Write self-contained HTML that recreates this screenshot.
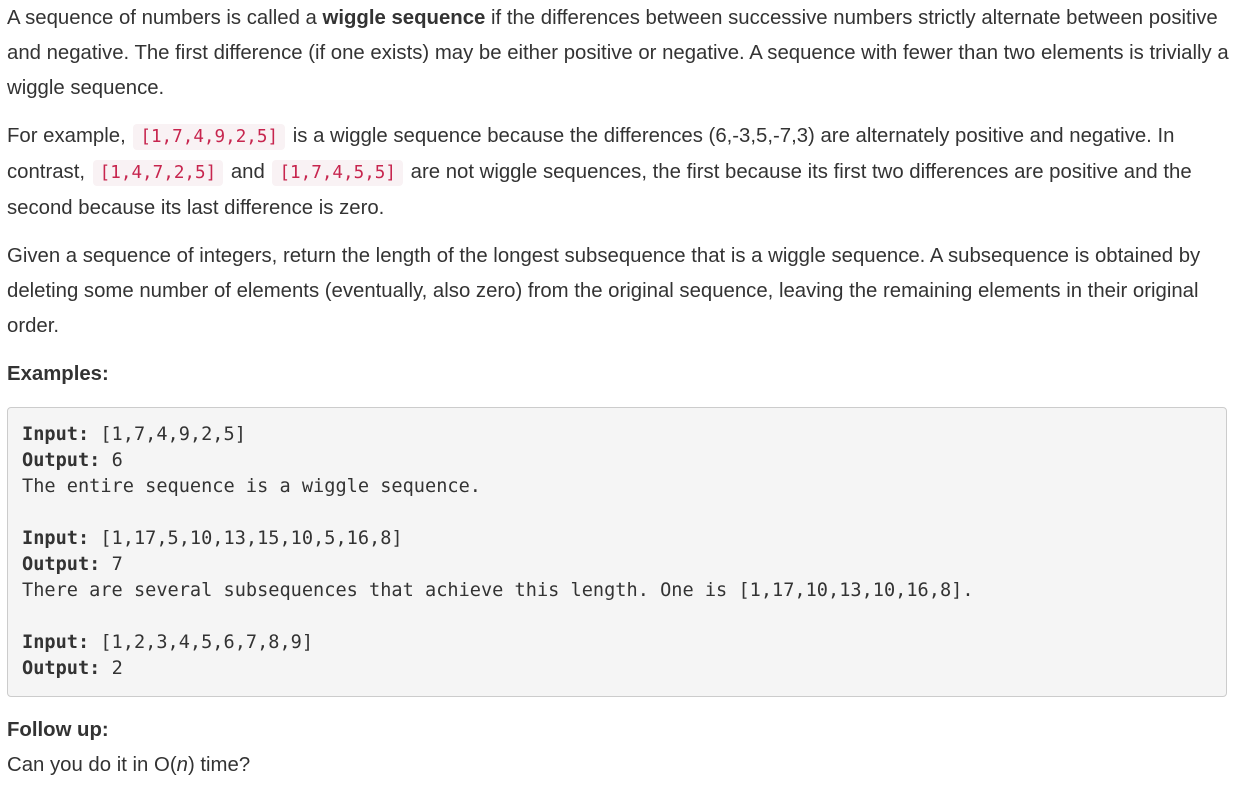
<!DOCTYPE html>
<html><head><meta charset="utf-8"><style>
body{margin:0;background:#fff;width:1240px;height:786px;overflow:hidden;font-family:"Liberation Sans",Arial,sans-serif;font-size:20.35px;line-height:35px;color:#333;}
.w{padding:0 7px;}
p{margin:0 0 13px 0;}
code{font-family:"DejaVu Sans Mono","Liberation Mono",monospace;font-size:17.6px;color:#c7254e;background:#f9f2f4;padding:3px 7px;border-radius:4px;margin:0 2px;}
pre{font-family:"DejaVu Sans Mono","Liberation Mono",monospace;font-size:18.6px;line-height:26px;color:#333;background:#f5f5f5;border:1px solid #ccc;border-radius:4px;margin:0 6px 0 0;padding:14px 14px 14px 14px;white-space:pre;}
b{font-weight:bold;}
</style></head><body><div class="w">
<p style="margin-top:1px">A sequence of numbers is called a <b>wiggle sequence</b> if the differences between successive numbers strictly alternate between positive and negative. The first difference (if one exists) may be either positive or negative. A sequence with fewer than two elements is trivially a wiggle sequence.</p>
<p>For example, <code>[1,7,4,9,2,5]</code> is a wiggle sequence because the differences (6,-3,5,-7,3) are alternately positive and negative. In contrast, <code>[1,4,7,2,5]</code> and <code>[1,7,4,5,5]</code> are not wiggle sequences, the first because its first two differences are positive and the second because its last difference is zero.</p>
<p>Given a sequence of integers, return the length of the longest subsequence that is a wiggle sequence. A subsequence is obtained by deleting some number of elements (eventually, also zero) from the original sequence, leaving the remaining elements in their original order.</p>
<p style="margin-bottom:15px"><b>Examples:</b></p>
<pre><b>Input:</b> [1,7,4,9,2,5]
<b>Output:</b> 6
The entire sequence is a wiggle sequence.

<b>Input:</b> [1,17,5,10,13,15,10,5,16,8]
<b>Output:</b> 7
There are several subsequences that achieve this length. One is [1,17,10,13,10,16,8].

<b>Input:</b> [1,2,3,4,5,6,7,8,9]
<b>Output:</b> 2</pre>
<p style="margin:16px 0 0"><b>Follow up:</b><br>Can you do it in O(<i>n</i>) time?</p>
</div></body></html>
